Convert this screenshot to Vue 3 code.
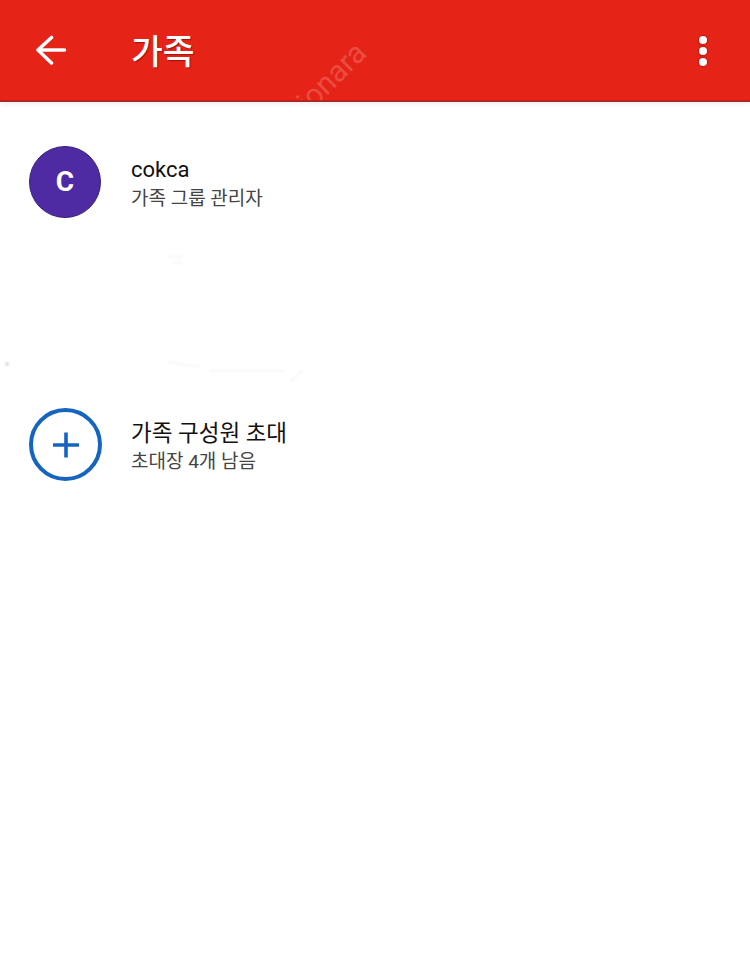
<template>
  <div class="page">
    <header class="appBar">
      <button class="iconBtn" aria-label="뒤로">
        <svg width="36" height="36" viewBox="0 0 36 36" fill="none" stroke="#fff" stroke-width="3.6" stroke-linecap="round" stroke-linejoin="round">
          <path d="M31.5 18H5M18.5 5.5L5 18L18.5 31" />
        </svg>
      </button>
      <h1 class="title">가족</h1>
      <span class="watermark">jonara</span>
      <button class="menuBtn" aria-label="더보기">
        <span class="dot" v-for="n in 3" :key="n"></span>
      </button>
    </header>

    <main class="list">
      <div class="row member">
        <div class="avatar">C</div>
        <div class="info">
          <div class="name">cokca</div>
          <div class="sub">가족 그룹 관리자</div>
        </div>
      </div>

      <!-- faint leftovers in the source image -->
      <svg class="smudge" width="330" height="150" viewBox="0 0 330 150" fill="none" stroke="#000" stroke-opacity="0.035" stroke-width="2">
        <path d="M168 17H184M172 23H183M168 122L200 127M210 131H285M290 142L303 130" />
        <circle cx="7" cy="124" r="1.5" fill="#000" fill-opacity="0.25" stroke="none" />
      </svg>

      <div class="row invite">
        <div class="addCircle">
          <svg width="28" height="28" viewBox="0 0 28 28" fill="none" stroke="#1565c0" stroke-width="3.6">
            <path d="M14 1.5V26.5M1 14H27" />
          </svg>
        </div>
        <div class="info inviteInfo">
          <div class="name kr">가족 구성원 초대</div>
          <div class="sub">초대장 4개 남음</div>
        </div>
      </div>
    </main>
  </div>
</template>

<script setup>
</script>

<style scoped>
.page {
  position: relative;
  width: 750px;
  height: 978px;
  background: #fff;
  overflow: hidden;
  font-family: Roboto, "Noto Sans CJK KR", sans-serif;
}

.appBar {
  position: relative;
  display: flex;
  align-items: center;
  height: 100px;
  padding: 0 0 0 33px;
  background: #e62317;
  border-bottom: 2px solid #b3241c;
  box-shadow: 0 2px 5px rgba(0, 0, 0, 0.07);
  overflow: hidden;
}

.iconBtn {
  display: flex;
  width: 36px;
  height: 36px;
  padding: 0;
  border: 0;
  background: none;
  filter: drop-shadow(0.5px 0.5px 0.5px rgba(90, 0, 0, 0.5));
}

.title {
  margin: 4px 0 0 62px;
  color: #fff;
  font-size: 34.5px;
  font-weight: 500;
  line-height: 40px;
  text-shadow: 1px 1px 1px rgba(90, 0, 0, 0.5);
}

.watermark {
  position: absolute;
  left: 290px;
  top: 60px;
  color: rgba(255, 255, 255, 0.2);
  font-size: 30px;
  line-height: 34px;
  transform: rotate(-45deg);
}

.menuBtn {
  display: flex;
  flex-direction: column;
  gap: 3px;
  margin: 1px 43px 0 auto;
  padding: 0;
  border: 0;
  background: none;
}

.dot {
  width: 8px;
  height: 8px;
  border-radius: 50%;
  background: #fff;
  box-shadow: 0 0 1px 1px rgba(120, 0, 0, 0.35);
}

.list {
  display: flex;
  flex-direction: column;
}

.smudge {
  position: absolute;
  left: 0;
  top: 240px;
  filter: blur(1px);
}

.row {
  display: flex;
  align-items: center;
  padding-left: 29px;
}

.member {
  margin-top: 44px;
}

.invite {
  margin-top: 190px;
}

.avatar {
  display: flex;
  align-items: center;
  justify-content: center;
  width: 72px;
  height: 72px;
  box-sizing: border-box;
  border: 1px solid #38207a;
  border-radius: 50%;
  background: #4e2aa3;
  color: #fff;
  font-family: Roboto, sans-serif;
  font-size: 28px;
  font-weight: 700;
  line-height: 1;
}

.addCircle {
  display: flex;
  align-items: center;
  justify-content: center;
  width: 73px;
  height: 73px;
  box-sizing: border-box;
  border: 4px solid #1565c0;
  border-radius: 50%;
}

.info {
  margin-left: 30px;
  padding-top: 4px;
}

.inviteInfo {
  margin-left: 29px;
}

.name {
  color: #111;
  font-size: 22px;
  line-height: 30px;
}

.name.kr {
  font-size: 22.5px;
}

.sub {
  color: #444;
  font-size: 19px;
  line-height: 28px;
}
</style>
